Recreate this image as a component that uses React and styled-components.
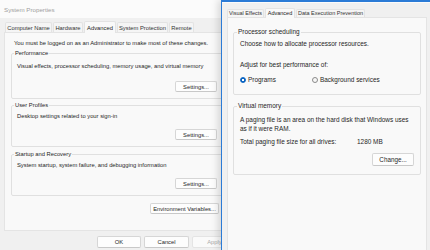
import styled, { createGlobalStyle } from "styled-components";

const GlobalStyle = createGlobalStyle`
	* {
		box-sizing: border-box;
	}
	html,
	body {
		margin: 0;
		padding: 0;
	}
	body {
		width: 430px;
		height: 250px;
		overflow: hidden;
		background: #f0f0f0;
		color: #262626;
		font-family: "Liberation Sans", Arial, sans-serif;
	}
`;

const leftTabs = [
	{ label: "Computer Name", w: 47 },
	{ label: "Hardware", w: 30 },
	{ label: "Advanced", w: 32, active: true },
	{ label: "System Protection", w: 51 },
	{ label: "Remote", w: 25 },
];

const rightTabs = [
	{ label: "Visual Effects", w: 37 },
	{ label: "Advanced", w: 30, active: true },
	{ label: "Data Execution Prevention", w: 69 },
];

const groups = [
	{
		title: "Performance",
		text: "Visual effects, processor scheduling, memory usage, and virtual memory",
		mt: 2,
		textGap: 5,
		buttonGap: 11,
	},
	{
		title: "User Profiles",
		text: "Desktop settings related to your sign-in",
		mt: 2,
		textGap: 3,
		buttonGap: 9,
	},
	{
		title: "Startup and Recovery",
		text: "System startup, system failure, and debugging information",
		mt: 3,
		textGap: 3,
		buttonGap: 9,
	},
];

const App = () => {
	return (
		<>
			<GlobalStyle />
			<Desktop>
				<LeftWindow>
					<Frame>
						<TitleBar>System Properties</TitleBar>
						<TabStrip $h={14} $pl={5}>
							{leftTabs.map((t) => (
								<Tab key={t.label} $w={t.w} $h={10} $active={t.active}>
									{t.label}
								</Tab>
							))}
						</TabStrip>
						<LeftPanel>
							<Notice>
								You must be logged on as an Administrator to make most of these
								changes.
							</Notice>
							{groups.map((g) => (
								<Group key={g.title} $mt={g.mt} $w={212} $px={5} $pb={6}>
									<Legend>{g.title}</Legend>
									<Desc $mt={g.textGap}>{g.text}</Desc>
									<ButtonRow $mt={g.buttonGap}>
										<Button $w={42} $h={11}>
											Settings...
										</Button>
									</ButtonRow>
								</Group>
							))}
							<ButtonRow $mt={7} $w={208}>
								<Button $w={69} $h={11}>
									Environment Variables...
								</Button>
							</ButtonRow>
						</LeftPanel>
						<Footer>
							<Button $w={44} $h={12}>
								OK
							</Button>
							<Button $w={45} $h={12}>
								Cancel
							</Button>
							<Button $w={45} $h={12} disabled>
								Apply
							</Button>
						</Footer>
					</Frame>
				</LeftWindow>

				<RightWindow>
					<TabStrip $h={15} $pl={5} $small>
						{rightTabs.map((t) => (
							<Tab key={t.label} $w={t.w} $h={8} $active={t.active}>
								{t.label}
							</Tab>
						))}
					</TabStrip>
					<RightPanel>
						<Group $mt={0} $px={6} $pb={10}>
							<Legend>Processor scheduling</Legend>
							<Desc $mt={3}>Choose how to allocate processor resources.</Desc>
							<Desc $mt={13}>Adjust for best performance of:</Desc>
							<RadioRow>
								<RadioOption>
									<RadioDot $checked />
									Programs
								</RadioOption>
								<RadioOption>
									<RadioDot />
									Background services
								</RadioOption>
							</RadioRow>
						</Group>

						<Group $mt={7} $px={6} $pb={8}>
							<Legend>Virtual memory</Legend>
							<Desc $mt={5}>
								A paging file is an area on the hard disk that Windows uses
								<br />
								as if it were RAM.
							</Desc>
							<InfoRow>
								<span>Total paging file size for all drives:</span>
								<span>1280 MB</span>
							</InfoRow>
							<ButtonRow $mt={6}>
								<Button $w={42} $h={13} $fs={6.3}>
									Change...
								</Button>
							</ButtonRow>
						</Group>
					</RightPanel>
				</RightWindow>
			</Desktop>
		</>
	);
};

const Desktop = styled.div`
	display: flex;
	width: 430px;
	height: 250px;
	overflow: hidden;
`;

const LeftWindow = styled.section`
	flex: none;
	width: 221px;
	overflow: hidden;
	background: #f0f0f0;
	font-size: 5.8px;
	line-height: 8px;
`;

const Frame = styled.div`
	width: 244px;
	display: flex;
	flex-direction: column;
`;

const TitleBar = styled.header`
	height: 18px;
	padding: 2px 0 0 4px;
	display: flex;
	align-items: center;
	background: #fbfbfb;
	color: #a0a0a0;
	font-size: 6.2px;
`;

const TabStrip = styled.nav`
	height: ${(p) => p.$h}px;
	padding-left: ${(p) => p.$pl}px;
	display: flex;
	align-items: flex-end;
	gap: 1px;
	font-size: ${(p) => (p.$small ? "5.5px" : "inherit")};
	color: #333333;
`;

const Tab = styled.div`
	position: relative;
	z-index: ${(p) => (p.$active ? 1 : 0)};
	width: ${(p) => p.$w}px;
	height: ${(p) => (p.$active ? p.$h + 2 : p.$h)}px;
	margin-bottom: ${(p) => (p.$active ? -1 : 0)}px;
	display: flex;
	align-items: center;
	justify-content: center;
	white-space: nowrap;
	border: 1px solid #e3e3e3;
	border-bottom: none;
	border-radius: 2px 2px 0 0;
	background: ${(p) => (p.$active ? "#f9f9f9" : "#f5f5f5")};
	color: ${(p) => (p.$active ? "#222222" : "#333333")};
`;

const LeftPanel = styled.div`
	margin-left: 4px;
	width: 236px;
	height: 199px;
	padding: 6px 0 0 6px;
	display: flex;
	flex-direction: column;
	border: 1px solid #e4e4e4;
	background: #f9f9f9;
`;

const Notice = styled.p`
	margin: 0 0 0 3px;
	white-space: nowrap;
`;

const Group = styled.fieldset`
	min-width: 0;
	width: ${(p) => (p.$w ? `${p.$w}px` : "auto")};
	margin: ${(p) => p.$mt}px 0 0;
	padding: 0 ${(p) => p.$px}px ${(p) => p.$pb}px;
	border: 1px solid #e0e0e0;
	border-radius: 2px;
`;

const Legend = styled.legend`
	margin-left: -3px;
	padding: 0 1px;
	white-space: nowrap;
`;

const Desc = styled.p`
	margin: ${(p) => p.$mt}px 0 0;
	white-space: nowrap;
`;

const ButtonRow = styled.div`
	display: flex;
	justify-content: flex-end;
	width: ${(p) => (p.$w ? `${p.$w}px` : "auto")};
	margin-top: ${(p) => p.$mt}px;
`;

const Button = styled.button`
	width: ${(p) => p.$w}px;
	height: ${(p) => p.$h}px;
	padding: 0;
	display: flex;
	align-items: center;
	justify-content: center;
	white-space: nowrap;
	font-family: inherit;
	font-size: ${(p) => (p.$fs ? `${p.$fs}px` : "inherit")};
	color: #262626;
	background: #fdfdfd;
	border: 1px solid #d6d6d6;
	border-bottom-color: #c8c8c8;
	border-radius: 2px;

	&:disabled {
		color: #ababab;
		background: #fafafa;
		border-color: #e4e4e4;
	}
`;

const Footer = styled.footer`
	display: flex;
	justify-content: flex-end;
	gap: 3px;
	padding: 5px 7px 0 0;
`;

const RightWindow = styled.section`
	position: relative;
	flex: 1;
	display: flex;
	flex-direction: column;
	border-left: 1px solid #2b7bd6;
	border-top: 2px solid #2b7bd6;
	background: #f0f0f0;
	box-shadow: inset 0 1px 0 #fbfbfb, -3px 0 7px rgba(0, 0, 0, 0.14);
	font-size: 6.45px;
	line-height: 8.6px;
`;

const RightPanel = styled.div`
	flex: 1;
	margin-left: 5px;
	width: 200px;
	padding: 10px 5px 0;
	border: 1px solid #e4e4e4;
	border-bottom: none;
	background: #f9f9f9;
`;

const RadioRow = styled.div`
	display: grid;
	grid-template-columns: 72px auto;
	margin-top: 6px;
`;

const RadioOption = styled.label`
	display: flex;
	align-items: center;
	gap: 2px;
	white-space: nowrap;
`;

const RadioDot = styled.span`
	flex: none;
	width: 6px;
	height: 6px;
	border-radius: 50%;
	border: 1px solid ${(p) => (p.$checked ? "#0a64c2" : "#8a8a8a")};
	background: ${(p) =>
		p.$checked
			? "radial-gradient(circle, #ffffff 0 1.1px, #0a64c2 1.4px)"
			: "#f7f7f7"};
`;

const InfoRow = styled.div`
	display: grid;
	grid-template-columns: 117px auto;
	margin-top: 5px;
	white-space: nowrap;
`;

export default App;
